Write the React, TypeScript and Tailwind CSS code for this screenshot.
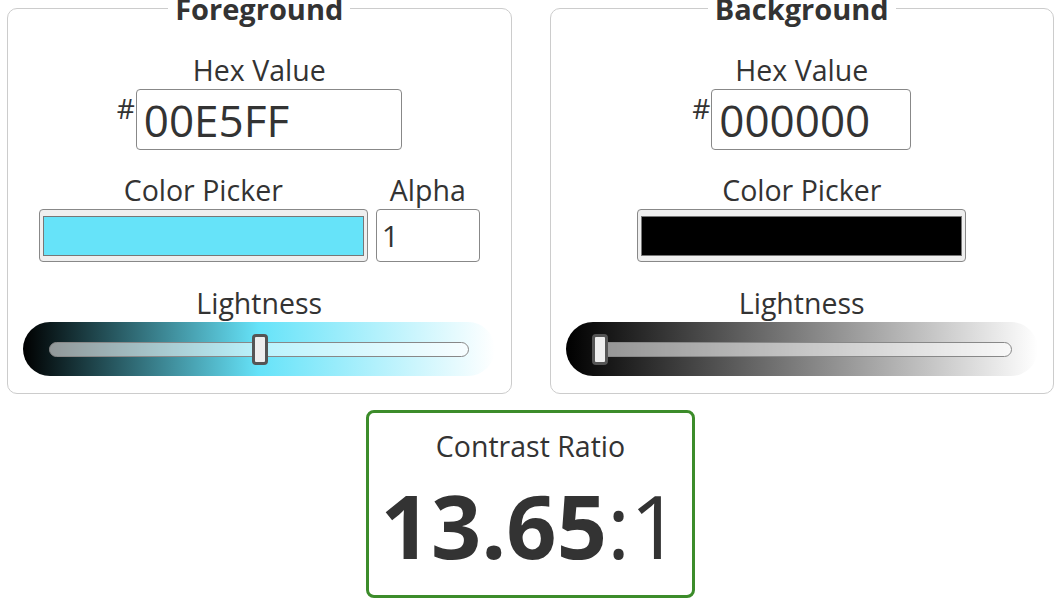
import React from "react";

const font = { fontFamily: '"Open Sans", "Noto Sans", sans-serif' };

type Panel = {
  title: string;
  hex: string;
  hexWidth: string;
  swatch: string;
  pill: string;
  thumbLeft: number;
  alpha?: string;
};

const panels: Panel[] = [
  {
    title: "Foreground",
    hex: "00E5FF",
    hexWidth: "w-[266px]",
    swatch: "bg-[#66e3f9]",
    pill: "bg-[linear-gradient(to_right,#000000_0%,#66e3f9_50%,#ffffff_100%)]",
    thumbLeft: 203,
    alpha: "1",
  },
  {
    title: "Background",
    hex: "000000",
    hexWidth: "w-[200px]",
    swatch: "bg-black",
    pill: "bg-[linear-gradient(to_right,#000000_0%,#ffffff_100%)]",
    thumbLeft: 0,
  },
];

const Slider: React.FC<{ pill: string; thumbLeft: number }> = ({ pill, thumbLeft }) => (
  <div className={`h-[54px] w-[472px] rounded-full px-[26px] flex items-center ${pill}`}>
    <div className="relative h-[15px] w-full rounded-full border border-[#888] bg-white/55">
      {/* thumb sits over the track */}
      <div
        className="absolute top-[-9px] h-[31px] w-[16px] rounded-[4px] border-[3px] border-[#555] bg-[#eee]"
        style={{ left: thumbLeft - 1 }}
      />
    </div>
  </div>
);

const ColorPanel: React.FC<{ p: Panel }> = ({ p }) => (
  <fieldset className="w-[505px] rounded-[10px] border border-[#ccc] pt-[22px] pb-[17px] flex flex-col items-center">
    <legend className="mx-auto px-[7px] text-[29px] font-bold leading-[41px]">{p.title}</legend>

    <div className="text-[28.5px] leading-[38px]">Hex Value</div>
    <div className="flex items-start">
      <span className="text-[28px] leading-[38px] pr-px">#</span>
      <input
        readOnly
        value={p.hex}
        className={`${p.hexWidth} h-[61px] rounded-[4px] border border-[#888] px-[7px] text-[44px] text-[#333] outline-none`}
        style={font}
      />
    </div>

    <div className="mt-[21px] flex gap-[8px]">
      <div className="flex flex-col items-center">
        <div className="text-[28.5px] leading-[38px]">Color Picker</div>
        <div className="h-[53px] w-[329px] rounded-[4px] border border-[#888] bg-[#efefef] px-[3px] pt-[6px] pb-[5px]">
          <div className={`h-full w-full border border-[#777] ${p.swatch}`} />
        </div>
      </div>
      {p.alpha && (
        <div className="flex flex-col items-center">
          <div className="text-[28.5px] leading-[38px]">Alpha</div>
          <input
            readOnly
            value={p.alpha}
            className="h-[53px] w-[104px] rounded-[4px] border border-[#888] px-[5px] text-[30px] text-[#333] outline-none"
            style={font}
          />
        </div>
      )}
    </div>

    <div className="mt-[22px] text-[28.5px] leading-[38px]">Lightness</div>
    <Slider pill={p.pill} thumbLeft={p.thumbLeft} />
  </fieldset>
);

export default function App() {
  return (
    <div className="w-[1056px] h-[600px] overflow-hidden bg-white text-[#333]" style={font}>
      <div className="-mt-[12px] pl-[7px] w-[1054px]">
        <div className="flex gap-[38px]">
          {panels.map((p) => (
            <ColorPanel key={p.title} p={p} />
          ))}
        </div>
        <div className="mt-[16px] flex justify-center">
          <div className="w-[329px] h-[188px] rounded-[8px] border-[3px] border-[#3c8c2a] pt-[14px] flex flex-col items-center">
            <div className="text-[28.5px] leading-[38px]">Contrast Ratio</div>
            <div className="text-[88px] leading-[120px]">
              <span className="font-bold">13.65</span>:1
            </div>
          </div>
        </div>
      </div>
    </div>
  );
}
